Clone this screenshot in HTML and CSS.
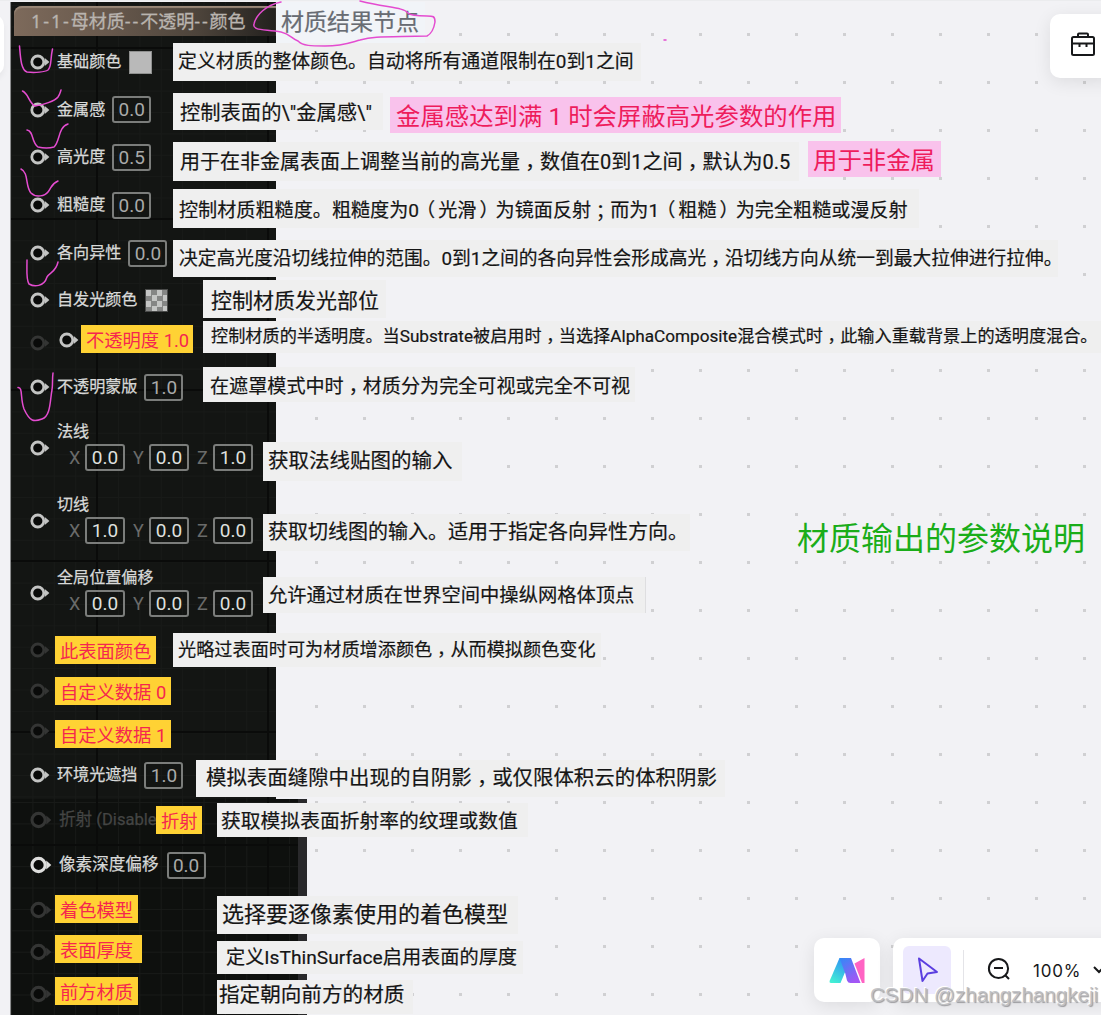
FILE: index.html
```html
<!DOCTYPE html>
<html lang="zh-CN">
<head>
    <meta charset="UTF-8">
    <meta name="viewport" content="width=device-width, initial-scale=1.0">
    <title>材质输出的参数说明</title>
    <link rel="stylesheet" href="styles.css">
</head>
<body>
    <svg class="defs" width="0" height="0">
        <symbol id="pin" viewBox="0 0 20 16">
            <circle cx="7.8" cy="8" r="6" fill="#090a09" stroke="currentColor" stroke-width="2.8"/>
            <path d="M14.8 4L19.400 8L14.8 12Z" fill="currentColor"/>
        </symbol>
    </svg>

    <main class="board">
        <!-- Material node -->
        <section class="node">
            <header class="node-title"><span>1-1-</span>母材质<span>--</span>不透明<span>--</span>颜色</header>
            <div class="row h48"><svg class="pin"><use href="#pin"/></svg><label>基础颜色</label><i class="swatch"></i></div>
            <div class="row h47"><svg class="pin"><use href="#pin"/></svg><label>金属感</label><b class="value">0.0</b></div>
            <div class="row h48"><svg class="pin"><use href="#pin"/></svg><label>高光度</label><b class="value">0.5</b></div>
            <div class="row h48"><svg class="pin"><use href="#pin"/></svg><label>粗糙度</label><b class="value">0.0</b></div>
            <div class="row h48"><svg class="pin"><use href="#pin"/></svg><label>各向异性</label><b class="value">0.0</b></div>
            <div class="row h46"><svg class="pin"><use href="#pin"/></svg><label>自发光颜色</label><i class="swatch checker"></i></div>
            <div class="row h40"><svg class="pin off"><use href="#pin"/></svg></div>
            <div class="row h48"><svg class="pin"><use href="#pin"/></svg><label>不透明蒙版</label><b class="value">1.0</b></div>
            <div class="row h73">
                <svg class="pin"><use href="#pin"/></svg>
                <div class="vector">
                    <label>法线</label>
                    <div class="axes"><em>X</em><b>0.0</b><em>Y</em><b>0.0</b><em>Z</em><b>1.0</b></div>
                </div>
            </div>
            <div class="row h73">
                <svg class="pin"><use href="#pin"/></svg>
                <div class="vector">
                    <label>切线</label>
                    <div class="axes"><em>X</em><b>1.0</b><em>Y</em><b>0.0</b><em>Z</em><b>0.0</b></div>
                </div>
            </div>
            <div class="row h72">
                <svg class="pin"><use href="#pin"/></svg>
                <div class="vector">
                    <label>全局位置偏移</label>
                    <div class="axes"><em>X</em><b>0.0</b><em>Y</em><b>0.0</b><em>Z</em><b>0.0</b></div>
                </div>
            </div>
            <div class="row h42"><svg class="pin off"><use href="#pin"/></svg></div>
            <div class="row h40"><svg class="pin off"><use href="#pin"/></svg></div>
            <div class="row h40"><svg class="pin off"><use href="#pin"/></svg></div>
            <div class="row h48"><svg class="pin"><use href="#pin"/></svg><label>环境光遮挡</label><b class="value">1.0</b></div>
        </section>
        <section class="node node-tail">
            <div class="row h42"><svg class="pin off"><use href="#pin"/></svg><label class="off">折射 (Disable</label></div>
            <div class="row h48"><svg class="pin"><use href="#pin"/></svg><label>像素深度偏移</label><b class="value">0.0</b></div>
            <div class="row h42"><svg class="pin off"><use href="#pin"/></svg></div>
            <div class="row h42"><svg class="pin off"><use href="#pin"/></svg></div>
            <div class="row h42"><svg class="pin off"><use href="#pin"/></svg></div>
        </section>

        <!-- Notes placed on the canvas -->
        <div class="note n-title">材质结果节点</div>
        <div class="note n-base">定义材质的整体颜色。自动将所有通道限制在0到1之间</div>
        <div class="note n-metal">控制表面的\"金属感\"</div>
        <div class="note n-spec">用于在非金属表面上调整当前的高光量<s>，</s>数值在0到1之间<s>，</s>默认为0.5</div>
        <div class="note n-rough">控制材质粗糙度。粗糙度为0<s class="open">（</s>光滑<s class="close">）</s>为镜面反射<s class="semi">；</s>而为1<s class="open">（</s>粗糙<s class="close">）</s>为完全粗糙或漫反射</div>
        <div class="note n-aniso">决定高光度沿切线拉伸的范围。0到1之间的各向异性会形成高光<s>，</s>沿切线方向从统一到最大拉伸进行拉伸。</div>
        <div class="note n-emissive">控制材质发光部位</div>
        <div class="note n-opacity">控制材质的半透明度。当Substrate被启用时<s>，</s>当选择AlphaComposite混合模式时<s>，</s>此输入重载背景上的透明度混合。</div>
        <div class="note n-mask">在遮罩模式中时<s>，</s>材质分为完全可视或完全不可视</div>
        <div class="note n-normal">获取法线贴图的输入</div>
        <div class="note n-tangent">获取切线图的输入。适用于指定各向异性方向。</div>
        <div class="note n-offset">允许通过材质在世界空间中操纵网格体顶点</div>
        <div class="note n-surface">光略过表面时可为材质增添颜色<s>，</s>从而模拟颜色变化</div>
        <div class="note n-ao">模拟表面缝隙中出现的自阴影<s>，</s>或仅限体积云的体积阴影</div>
        <div class="note n-refract">获取模拟表面折射率的纹理或数值</div>
        <div class="note n-model">选择要逐像素使用的着色模型</div>
        <div class="note n-thick">定义IsThinSurface启用表面的厚度</div>
        <div class="note n-front">指定朝向前方的材质</div>

        <!-- Highlighted text -->
        <svg class="pin pin-free"><use href="#pin"/></svg>
        <div class="tag t-opacity">不透明度 1.0</div>
        <div class="tag t-surface">此表面颜色</div>
        <div class="tag t-data0">自定义数据 0</div>
        <div class="tag t-data1">自定义数据 1</div>
        <div class="tag t-refract">折射</div>
        <div class="tag t-model">着色模型</div>
        <div class="tag t-thick">表面厚度</div>
        <div class="tag t-front">前方材质</div>
        <div class="mark m-metal">金属感达到满 1 时会屏蔽高光参数的作用</div>
        <div class="mark m-spec">用于非金属</div>
        <h1 class="headline">材质输出的参数说明</h1>

        <!-- Pen strokes -->
        <svg class="ink" viewBox="0 0 1101 1015">
            <path d="M281 2C266 5 256 15 254 24C252 31 265 29 281 32C290 34 291 38 298 41C303 46 311 46 325 46C343 46 352 42 360 40C374 36 385 37 427 36C431 34 434 28 435 22C435 16 433 16 427 16C413 16 409 14 408 13C403 7 388 8 360 1"/>
            <path d="M19.500 46C20.500 58 21 70 27 72C35 73 45 72 48 70C52 66 50 60 52.500 49"/>
            <path d="M22.500 91C29 94 28 102 35 106C43 105 55 101 58 97C60 94 60 93 61 90"/>
            <path d="M27 130C34 131 31 142 38 147C43 148 50 148 54 147C60 142 58 127 68 124"/>
            <path d="M21 169C29 173 25 186 31 193C36 198 45 196 48 192C52 187 51 184 58 181"/>
            <path d="M27 260C27 270 26 280 29 284C34 287 44 287 47 277C50 272 56 272 58 262"/>
            <path d="M18 387.500C23 387 20 398 24 409C30 422 34 422 42 419C51 416 50 399 52 390C53 383 52 381 53 373"/>
            <path d="M664 40H666"/>
        </svg>
    </main>

    <!-- Floating controls -->
    <div class="panel side-left"></div>
    <div class="panel toolbox">
        <svg width="26" height="26" viewBox="0 0 26 26" fill="none" stroke="#17181a" stroke-width="2">
            <rect x="2" y="6" width="22" height="18" rx="1.500"/>
            <path d="M8 6V3.500Q8 2.500 9 2.500H17Q18 2.500 18 3.500V6M2 12.500H24M9.500 12V16M16.500 12V16"/>
        </svg>
    </div>
    <div class="panel ai">
        <svg width="36" height="26" viewBox="0 0 36 26">
            <defs>
                <linearGradient id="teal" x1="0.700" y1="0" x2="0.200" y2="1"><stop offset="0" stop-color="#2f8bf7"/><stop offset="1" stop-color="#42f0d4"/></linearGradient>
                <linearGradient id="violet" x1="0" y1="0" x2="0.600" y2="1"><stop offset="0" stop-color="#2f8bf7"/><stop offset="1" stop-color="#a356f5"/></linearGradient>
            </defs>
            <path d="M10.500 0H22L11.500 25H2Q0 25 .800 22.500Z" fill="url(#teal)"/>
            <path d="M10.500 0H22L31.500 25H21.500Q19 25 18 22.500L16.300 15.500Z" fill="url(#violet)"/>
            <path d="M35.500 0V25H33L25.500 5.500Z" fill="#ff63c3"/>
        </svg>
    </div>
    <div class="panel toolbar">
        <div class="tool">
            <svg width="24" height="28" viewBox="0 0 24 28" fill="none" stroke="#5b3fe0" stroke-width="2" stroke-linejoin="round"><path d="M4 2.500L22 16L12.500 17.500L7.500 25Z"/></svg>
        </div>
        <div class="divider"></div>
        <svg class="zoom-out" width="26" height="26" viewBox="0 0 26 26" fill="none" stroke="#17181a" stroke-width="2"><circle cx="12.500" cy="12.500" r="9.600"/><path d="M8 12H17M19 19L23 23"/></svg>
        <span class="percent">100%</span>
        <svg class="chevron" width="14" height="10" viewBox="0 0 14 10" fill="none" stroke="#17181a" stroke-width="2"><path d="M2 2L7 7L12 2"/></svg>
    </div>
    <div class="watermark">CSDN @zhangzhangkeji</div>
</body>
</html>
```
FILE: styles.css
```css
/* Reset styles */
* {
    margin: 0;
    padding: 0;
    box-sizing: border-box;
}

body {
    width: 1101px;
    height: 1015px;
    overflow: hidden;
    position: relative;
    background-color: #f2f2f5;
    font-family: Roboto, "Noto Sans CJK SC", sans-serif;
}

.defs {
    position: absolute;
}

/* Dotted canvas */
.board {
    position: relative;
    width: 1101px;
    height: 1015px;
    padding: 1px 0 0 10px;
    border-top: 1px solid #ebecee;
    background-image: conic-gradient(from 90deg at 45px 45px, #d0d0d2 0 90deg, transparent 0);
    background-size: 48px 48px;
    background-position: -18px -13px;
}

/* Material node */
.node {
    width: 266px;
    padding: 4px 0 0 3px;
    border-left: 1px solid #8c8d8e;
    background-color: #131513;
    background-image:
        linear-gradient(90deg, #0a0b0a 2px, transparent 2px),
        linear-gradient(#0a0b0a 2px, transparent 2px),
        linear-gradient(90deg, #181a18 1px, transparent 1px),
        linear-gradient(#181a18 1px, transparent 1px);
    background-size: 171px 100%, 100% 171px, 21.4px 21.4px, 21.4px 21.4px;
    background-position: 85px 0, 0 45px, 0 3px, 0 3px;
}

.node-tail {
    width: 297px;
    padding-top: 0;
    border-right: 9px solid #29292b;
    background-color: #0e100e;
}

.node-title {
    height: 30px;
    margin-bottom: 2px;
    padding-left: 17px;
    border-radius: 8px 0 0 0;
    background: linear-gradient(90deg, #7d6a5b 0, #68594d 35%, #4d443b 70%, #23211e 100%);
    box-shadow: inset 0 2px 1px #9a8878;
    color: #b9b4af;
    font-size: 18px;
    line-height: 30px;
    white-space: nowrap;
    -webkit-text-stroke: 0.3px;
}

.node-title span {
    font-family: "Noto Sans", sans-serif;
    letter-spacing: 1.9px;
}

.row {
    display: flex;
    align-items: center;
    padding-left: 16px;
}

.h40 { height: 40px; }
.h42 { height: 42px; }
.h46 { height: 46px; }
.h47 { height: 47px; }
.h48 { height: 48px; }
.h72 { height: 72px; }
.h73 { height: 73px; }

.pin {
    width: 20px;
    height: 16px;
    flex: none;
    margin-right: 7px;
    color: #c3c4c3;
}

.pin.off {
    color: #343534;
}

.row label {
    color: #d8d9d8;
    font-size: 16.1px;
    line-height: 22px;
    white-space: nowrap;
    -webkit-text-stroke: 0.25px;
}

.row label.off {
    color: #444544;
}

.value,
.axes b {
    width: 39px;
    height: 27px;
    border: 2px solid #7b7d7b;
    border-radius: 3px;
    color: #a9aaa9;
    font-size: 19px;
    font-weight: 400;
    line-height: 23px;
    text-align: center;
}

.value {
    margin-left: 7px;
}

.swatch {
    width: 23px;
    height: 23px;
    margin-left: 8px;
    border: 1px solid #8f908f;
    background-color: #b9b9b9;
}

.checker {
    border-color: #4a4b4a;
    background: repeating-conic-gradient(#858685 0 25%, #c4c5c4 0 50%) 0 0 / 11px 11px;
}

.vector {
    display: flex;
    flex-direction: column;
    gap: 1px;
    padding-bottom: 2px;
}

.axes {
    display: flex;
    padding-left: 12px;
}

.axes em {
    width: 16px;
    color: #6a6b6a;
    font-size: 18px;
    font-style: normal;
    line-height: 28px;
}

.axes b {
    width: 40px;
    margin-right: 8px;
    color: #dfe0df;
}

.node-tail .row {
    padding-left: 16px;
}

.node-tail .pin {
    width: 22px;
    height: 18px;
}

.node-tail label {
    font-size: 16.6px;
}

.node-tail .value {
    margin-left: 8px;
}

.node-tail .row:nth-child(2) .pin {
    color: #dededd;
}

/* Notes on the canvas */
.note,
.tag,
.mark,
.headline {
    position: absolute;
    display: flex;
    align-items: center;
    white-space: nowrap;
}

.note {
    background-color: #efefef;
    color: #151515;
    -webkit-text-stroke: 0.2px;
}

/* Punctuation centred in its cell, resting on the baseline */
.note s {
    font-family: "Noto Sans CJK TC", sans-serif;
    text-decoration: none;
    transform: translateY(.3em);
}

.note s.semi {
    transform: translateY(.08em);
}

.note s.open {
    transform: translateX(-.16em);
}

.note s.close {
    transform: translateX(.16em);
}

.n-title { left: 276px; top: 1px; width: 149px; height: 41px; padding: 0 0 6px 5px; font-size: 23px; color: #686c73; background-color: #f1f4f8; }
.n-base { left: 173px; top: 42px; width: 468px; height: 38px; padding: 0 0 6px 5px; font-size: 18.9px; }
.n-metal { left: 173px; top: 92px; width: 210px; height: 37px; padding: 0 0 2px 7px; font-size: 20.3px; }
.n-spec { left: 173px; top: 141px; width: 626px; height: 39px; padding: 0 0 2px 7px; font-size: 20px; }
.n-rough { left: 173px; top: 188px; width: 746px; height: 39px; padding-left: 6px; font-size: 19.13px; }
.n-aniso { left: 173px; top: 239px; width: 885px; height: 37px; padding: 0 0 4px 6px; font-size: 18.75px; }
.n-emissive { left: 203px; top: 279px; width: 183px; height: 38px; padding-left: 8px; font-size: 21px; }
.n-opacity { left: 203px; top: 320px; width: 898px; height: 32px; padding: 0 0 6px 8px; font-size: 17.17px; }
.n-mask { left: 203px; top: 366px; width: 432px; height: 35px; padding-left: 7px; font-size: 19.1px; }
.n-normal { left: 263px; top: 441px; width: 199px; height: 39px; padding: 0 0 6px 5px; font-size: 20.5px; }
.n-tangent { left: 263px; top: 513px; width: 427px; height: 37px; padding: 0 0 4px 5px; font-size: 20px; }
.n-offset { left: 263px; top: 576px; width: 383px; height: 36px; padding: 0 0 2px 5px; border-right: 1px solid #dedee0; font-size: 19.3px; }
.n-surface { left: 173px; top: 632px; width: 428px; height: 34px; padding: 0 0 4px 5px; font-size: 18.17px; }
.n-ao { left: 196px; top: 759px; width: 529px; height: 37px; padding: 0 0 5px 10px; font-size: 20.45px; }
.n-refract { left: 217px; top: 802px; width: 311px; height: 34px; padding: 0 0 2px 4px; font-size: 19.8px; }
.n-model { left: 217px; top: 895px; width: 301px; height: 38px; padding: 0 0 6px 5px; font-size: 22px; }
.n-thick { left: 217px; top: 940px; width: 306px; height: 33px; padding: 0 0 4px 9px; font-size: 19.2px; }
.n-front { left: 217px; top: 979px; width: 196px; height: 34px; padding: 0 0 8px 2px; font-size: 20.6px; }

/* Highlighted text */
.tag {
    height: 28px;
    padding-left: 5px;
    background-color: #ffd234;
    color: #f5264f;
    font-size: 18.3px;
}

.t-opacity { left: 81px; top: 324px; width: 112px; }
.t-surface { left: 55px; top: 635px; width: 101px; }
.t-data0 { left: 55px; top: 676px; width: 116px; }
.t-data1 { left: 55px; top: 719px; width: 116px; }
.t-refract { left: 156px; top: 805px; width: 46px; }
.t-model { left: 55px; top: 894px; width: 83px; }
.t-thick { left: 55px; top: 934px; width: 87px; }
.t-front { left: 55px; top: 976px; width: 83px; }

.pin-free {
    position: absolute;
    left: 59px;
    top: 331px;
}

.mark {
    height: 36px;
    padding: 0 6px 2px;
    background-color: #f9c2ec;
    color: #ee1c5c;
    font-size: 24.4px;
}

.m-metal { left: 390px; top: 96px; width: 451px; }
.m-spec { left: 808px; top: 140px; width: 133px; padding-left: 5px; }

.headline {
    left: 797px;
    top: 512px;
    height: 46px;
    color: #1aad19;
    font-size: 32px;
    font-weight: 400;
}

.ink {
    position: absolute;
    left: 0;
    top: -1px;
    width: 1101px;
    height: 1015px;
    fill: none;
    stroke: #e44cd0;
    stroke-width: 1.5;
    stroke-linecap: round;
}

/* Floating controls */
.panel {
    position: absolute;
    display: flex;
    align-items: center;
    border-radius: 10px;
    background-color: #fff;
    box-shadow: 0 4px 18px rgba(0, 0, 0, 0.09);
}

.side-left {
    left: -46px;
    top: 15px;
    width: 50px;
    height: 60px;
    box-shadow: 0 4px 6px rgba(0, 0, 0, 0.05);
}

.toolbox {
    left: 1050px;
    top: 14px;
    width: 70px;
    height: 64px;
    padding: 0 0 4px 20px;
}

.ai {
    left: 814px;
    top: 938px;
    width: 66px;
    height: 64px;
    padding: 1px 0 0 15px;
}

.toolbar {
    left: 893px;
    top: 938px;
    width: 230px;
    height: 64px;
    padding-left: 10px;
}

.tool {
    display: flex;
    align-items: center;
    justify-content: center;
    width: 48px;
    height: 48px;
    border-radius: 6px;
    background-color: #ede9fe;
}

.divider {
    width: 1px;
    height: 41px;
    margin: 0 22px 0 12px;
    background-color: #e4e4e8;
}

.percent {
    width: 50px;
    margin: 1px 9px 0 21px;
    color: #17181a;
    font-family: Inter, sans-serif;
    font-size: 17px;
    letter-spacing: 0.8px;
}

.zoom-out,
.chevron {
    flex: none;
}

.zoom-out {
    margin-bottom: 2px;
}

.watermark {
    position: absolute;
    left: 870px;
    top: 983px;
    color: rgba(190, 190, 193, 0.9);
    font-family: "Liberation Sans", Arial, sans-serif;
    font-size: 20.6px;
    line-height: 24px;
    text-shadow: 1px 1px 1px #9a9a9d, -1px -1px 0 #fff;
    white-space: nowrap;
}
```
